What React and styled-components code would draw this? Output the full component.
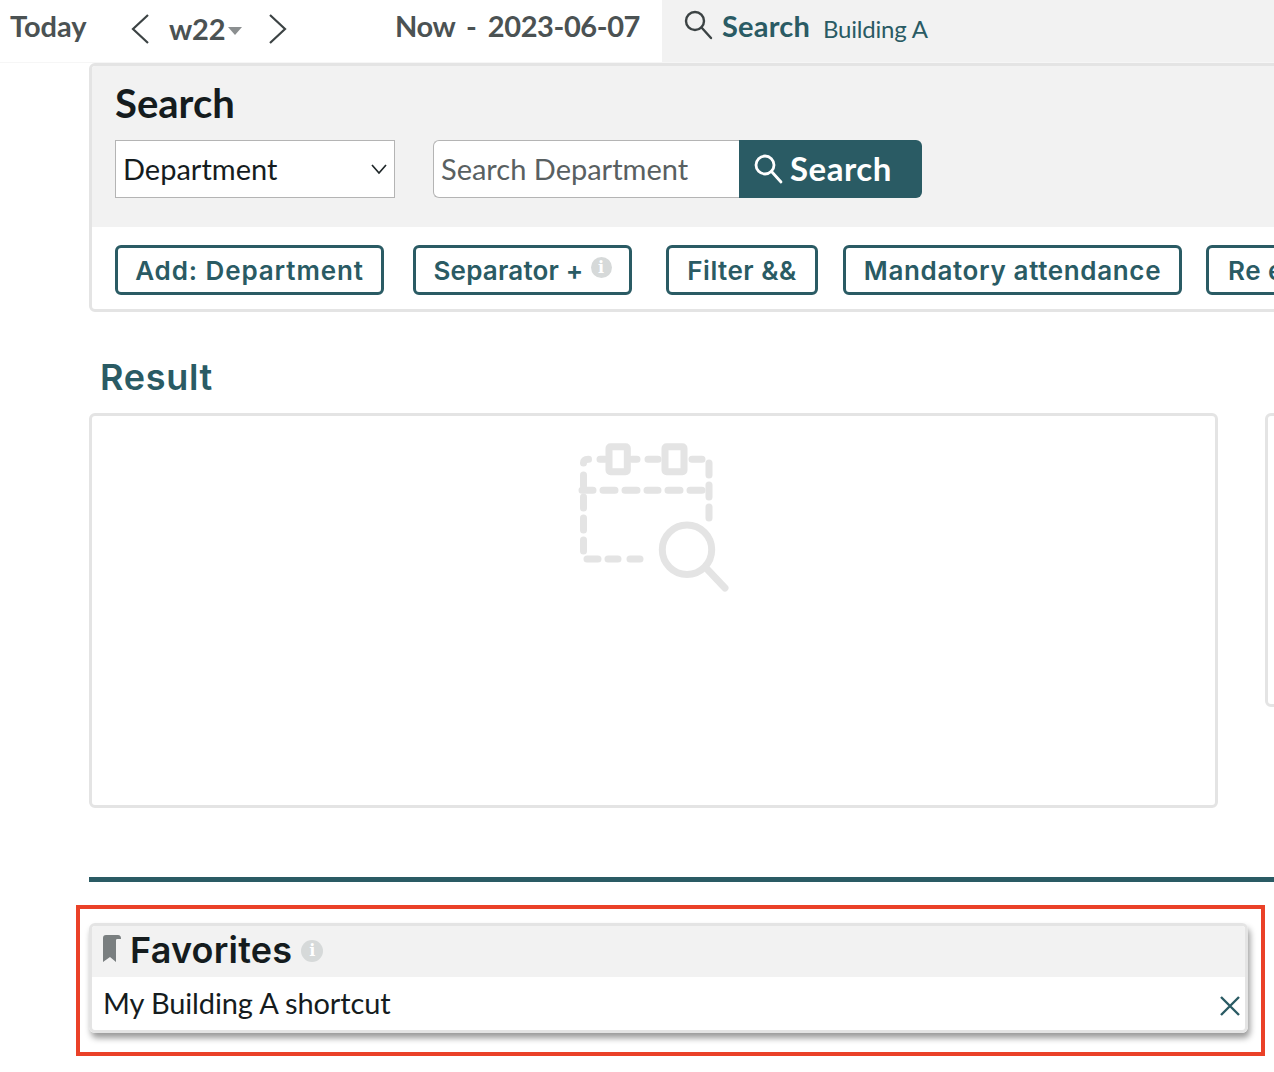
import styled, { createGlobalStyle } from "styled-components";

const teal = "#2a5b64";

const GlobalStyle = createGlobalStyle`
  html, body {
    margin: 0;
    padding: 0;
    background: #fff;
    overflow: hidden;
  }
  * { box-sizing: border-box; }
`;

const Page = styled.div`
  width: 1274px;
  height: 1072px;
  overflow: hidden;
  font-family: Lato, "Liberation Sans", sans-serif;
  color: #151c1e;
`;

const TopBar = styled.header`
  display: flex;
  height: 63px;
  border-bottom: 1px solid #f6f6f6;
`;

const DateNav = styled.div`
  display: flex;
  width: 662px;
  flex: none;
  align-items: flex-start;
  padding: 9px 0 0 10px;
  color: #4b5253;
  font-size: 29px;
  font-weight: 700;
  line-height: 34px;
`;

const TodayLabel = styled.span`
  width: 119px;
`;

const Chevron = styled.svg`
  width: 22px;
  height: 32px;
  margin-top: 4px;
  fill: none;
  stroke: #3c4344;
  stroke-width: 2.2;
`;

const WeekLabel = styled.span`
  display: flex;
  align-items: center;
  width: 98px;
  margin: 3px 0 0 18px;
  letter-spacing: -0.2px;
`;

const Caret = styled.span`
  width: 0;
  height: 0;
  margin: 4px 0 0 3px;
  border-left: 7px solid transparent;
  border-right: 7px solid transparent;
  border-top: 8px solid #8b8f90;
`;

const NowLabel = styled.span`
  margin-left: 106px;
  white-space: pre;
  letter-spacing: -0.4px;
  word-spacing: -1px;
`;

const SearchTab = styled.div`
  display: flex;
  flex: 1;
  align-items: flex-start;
  padding: 9px 0 0 22px;
  background: #f2f2f2;
`;

const TabIcon = styled.svg`
  width: 30px;
  height: 32px;
  margin-top: ${(p) => p.$top || 0}px;
  fill: none;
  stroke: ${(p) => p.$stroke};
  stroke-width: ${(p) => p.$weight};
  stroke-linecap: round;
`;

const TabTitle = styled.span`
  margin-left: 8px;
  color: ${teal};
  font-size: 29px;
  font-weight: 700;
  line-height: 34px;
  letter-spacing: 0.2px;
`;

const TabPlace = styled.span`
  margin: 5px 0 0 13px;
  color: ${teal};
  font-size: 24px;
  line-height: 30px;
  letter-spacing: -0.2px;
`;

const Main = styled.main`
  padding-left: 89px;
`;

const SearchPanel = styled.section`
  width: 1300px;
  height: 249px;
  overflow: hidden;
  border: 3px solid #e4e4e4;
  border-radius: 6px;
`;

const SearchHead = styled.div`
  height: 161px;
  padding: 15px 0 0 23px;
  background: #f2f2f2;
`;

const SearchTitle = styled.h2`
  margin: 0 0 15px;
  font-size: 40px;
  font-weight: 700;
  line-height: 44px;
`;

const SearchRow = styled.div`
  display: flex;
`;

const Select = styled.div`
  display: flex;
  align-items: center;
  justify-content: space-between;
  width: 280px;
  height: 58px;
  padding: 0 6px 2px 7px;
  border: 1px solid #b4b4b4;
  background: #fff;
  font-size: 29px;
`;

const SelectArrow = styled.svg`
  width: 18px;
  height: 12px;
  margin-top: 2px;
  fill: none;
  stroke: #20282a;
  stroke-width: 1.7;
`;

const SearchInput = styled.div`
  display: flex;
  align-items: center;
  width: 306px;
  height: 58px;
  margin-left: 38px;
  padding: 0 0 2px 7px;
  border: 1px solid #b4b4b4;
  border-right: none;
  border-radius: 6px 0 0 6px;
  background: #fff;
  color: #596061;
  font-size: 29px;
`;

const SearchButton = styled.div`
  display: flex;
  align-items: center;
  gap: 6px;
  width: 183px;
  height: 58px;
  padding: 0 0 2px 15px;
  border-radius: 0 6px 6px 0;
  background: ${teal};
  color: #fff;
  font-size: 33px;
  font-weight: 700;
  letter-spacing: 0.5px;
`;

const Actions = styled.div`
  display: flex;
  padding: 18px 0 0 23px;
`;

const ActionButton = styled.div`
  display: flex;
  flex: none;
  align-items: center;
  justify-content: ${(p) => (p.$clip ? "flex-start" : "center")};
  gap: 7px;
  width: ${(p) => p.$width}px;
  height: 50px;
  margin-right: ${(p) => p.$gap}px;
  padding-left: ${(p) => (p.$clip ? 19 : 0)}px;
  border: 3px solid ${teal};
  border-radius: 6px;
  color: ${teal};
  font-family: Inter, "Open Sans", sans-serif;
  font-size: 26px;
  font-weight: 600;
  letter-spacing: ${(p) => p.$track}px;
  white-space: nowrap;
`;

const InfoDot = styled.span`
  display: inline-flex;
  align-items: center;
  justify-content: center;
  width: ${(p) => p.$size}px;
  height: ${(p) => p.$size}px;
  margin-bottom: ${(p) => p.$lift}px;
  border-radius: 50%;
  background: #d6d9d9;
  color: #fff;
  font-family: "DejaVu Serif", serif;
  font-size: 16px;
  font-weight: 700;
`;

const ResultTitle = styled.h2`
  margin: 44px 0 15px 11px;
  color: ${teal};
  font-family: Inter, "Open Sans", sans-serif;
  font-size: 36px;
  font-weight: 600;
  line-height: 42px;
  letter-spacing: 0.7px;
`;

const ResultRow = styled.div`
  display: flex;
  align-items: flex-start;
  gap: 47px;
`;

const ResultCard = styled.div`
  flex: none;
  width: ${(p) => p.$width}px;
  height: ${(p) => p.$height}px;
  padding-top: 14px;
  border: 3px solid #e4e4e4;
  border-radius: 6px;
`;

const EmptyIcon = styled.svg`
  display: block;
  width: 190px;
  height: 170px;
  margin-left: 468px;
  fill: none;
  stroke: #e4e4e4;
  stroke-width: 7;
  stroke-linecap: round;
`;

const Divider = styled.hr`
  height: 5px;
  margin: 69px 0 23px;
  border: none;
  background: ${teal};
`;

const Highlight = styled.div`
  width: 1189px;
  height: 151px;
  margin-left: -13px;
  padding: 14px 13px 0 9px;
  border: 4px solid #ea4128;
`;

const FavoritesCard = styled.section`
  height: 110px;
  overflow: hidden;
  border: 3px solid #e4e4e4;
  border-radius: 6px;
  box-shadow: 2px 5px 6px rgba(0, 0, 0, 0.4);
`;

const FavoritesHead = styled.div`
  display: flex;
  align-items: center;
  height: 51px;
  padding-left: 10px;
  background: #f2f2f2;
`;

const Bookmark = styled.svg`
  width: 20px;
  height: 29px;
  margin-bottom: 6px;
  fill: #7a7f80;
`;

const FavoritesTitle = styled.h2`
  margin: 0 9px 4px 8px;
  font-family: Inter, "Open Sans", sans-serif;
  font-size: 36px;
  font-weight: 600;
  line-height: 44px;
  letter-spacing: 0.2px;
`;

const FavoriteRow = styled.div`
  display: flex;
  align-items: center;
  justify-content: space-between;
  height: 53px;
  padding: 0 4px 2px 11px;
  font-size: 29px;
  letter-spacing: -0.12px;
`;

const CloseIcon = styled.svg`
  width: 22px;
  height: 22px;
  margin-top: 7px;
  fill: none;
  stroke: ${teal};
  stroke-width: 2.4;
`;

const MagnifierPath = () => (
  <>
    <circle cx="11" cy="11" r="9" />
    <path d="M17.5 17.5 27 28" />
  </>
);

export default function App() {
  return (
    <Page>
      <GlobalStyle />
      <TopBar>
        <DateNav>
          <TodayLabel>Today</TodayLabel>
          <Chevron viewBox="0 0 22 32">
            <path d="M19 2 4 16l15 14" />
          </Chevron>
          <WeekLabel>
            w22
            <Caret />
          </WeekLabel>
          <Chevron viewBox="0 0 22 32">
            <path d="M3 2l15 14L3 30" />
          </Chevron>
          <NowLabel>{"Now  -  2023-06-07"}</NowLabel>
        </DateNav>
        <SearchTab>
          <TabIcon viewBox="0 0 30 32" $stroke="#3c4344" $weight="2.4" $top={1}>
            <MagnifierPath />
          </TabIcon>
          <TabTitle>Search</TabTitle>
          <TabPlace>Building A</TabPlace>
        </SearchTab>
      </TopBar>
      <Main>
        <SearchPanel>
          <SearchHead>
            <SearchTitle>Search</SearchTitle>
            <SearchRow>
              <Select>
                Department
                <SelectArrow viewBox="0 0 18 12">
                  <path d="M2 2l7 8 7-8" />
                </SelectArrow>
              </Select>
              <SearchInput>Search Department</SearchInput>
              <SearchButton>
                <TabIcon viewBox="0 0 30 32" $stroke="#fff" $weight="2.8" $top={4}>
                  <MagnifierPath />
                </TabIcon>
                Search
              </SearchButton>
            </SearchRow>
          </SearchHead>
          <Actions>
            <ActionButton $width={269} $gap={29} $track={0.9}>Add: Department</ActionButton>
            <ActionButton $width={219} $gap={34} $track={0.2}>
              Separator +
              <InfoDot $size={21} $lift={5}>i</InfoDot>
            </ActionButton>
            <ActionButton $width={152} $gap={25} $track={0.5}>Filter &amp;&amp;</ActionButton>
            <ActionButton $width={339} $gap={24} $track={0.65}>Mandatory attendance</ActionButton>
            <ActionButton $width={200} $gap={0} $track={0.5} $clip>Re evaluate</ActionButton>
          </Actions>
        </SearchPanel>
        <ResultTitle>Result</ResultTitle>
        <ResultRow>
          <ResultCard $width={1129} $height={395}>
            <EmptyIcon viewBox="0 0 190 170">
              <path d="M23.5 33c0-2 1-3.5 5-3.7M40 29.3h5M72 29.3h5M88 29.3h10M132 29.3h10" />
              <path d="M149 33v12M149 55v12M149 77v11" />
              <path d="M23.5 45v11M23.5 67v11M23.5 88v12M23.5 110v11" />
              <path d="M27 129h11M48 129h10M70 129h10" />
              <path d="M22 60.3h11M43 60.3h12M65 60.3h12M87 60.3h11M108 60.3h12M130 60.3h12" />
              <rect x="49" y="16.7" width="18.3" height="25" rx="1.5" />
              <rect x="105" y="16.7" width="19" height="25" rx="1.5" />
              <circle cx="127" cy="119.7" r="24.7" />
              <path d="M147 139l18 19" />
            </EmptyIcon>
          </ResultCard>
          <ResultCard $width={60} $height={294} />
        </ResultRow>
        <Divider />
        <Highlight>
          <FavoritesCard>
            <FavoritesHead>
              <Bookmark viewBox="0 0 20 29">
                <path d="M1 4c0-2 1-3 3-3h12c2 0 3 1 3 4h-4c-1 0-1 1-1 2v21l-6-5-7 5z" />
              </Bookmark>
              <FavoritesTitle>Favorites</FavoritesTitle>
              <InfoDot $size={22} $lift={2}>i</InfoDot>
            </FavoritesHead>
            <FavoriteRow>
              My Building A shortcut
              <CloseIcon viewBox="0 0 22 22">
                <path d="M2 2l18 18M20 2 2 20" />
              </CloseIcon>
            </FavoriteRow>
          </FavoritesCard>
        </Highlight>
      </Main>
    </Page>
  );
}
